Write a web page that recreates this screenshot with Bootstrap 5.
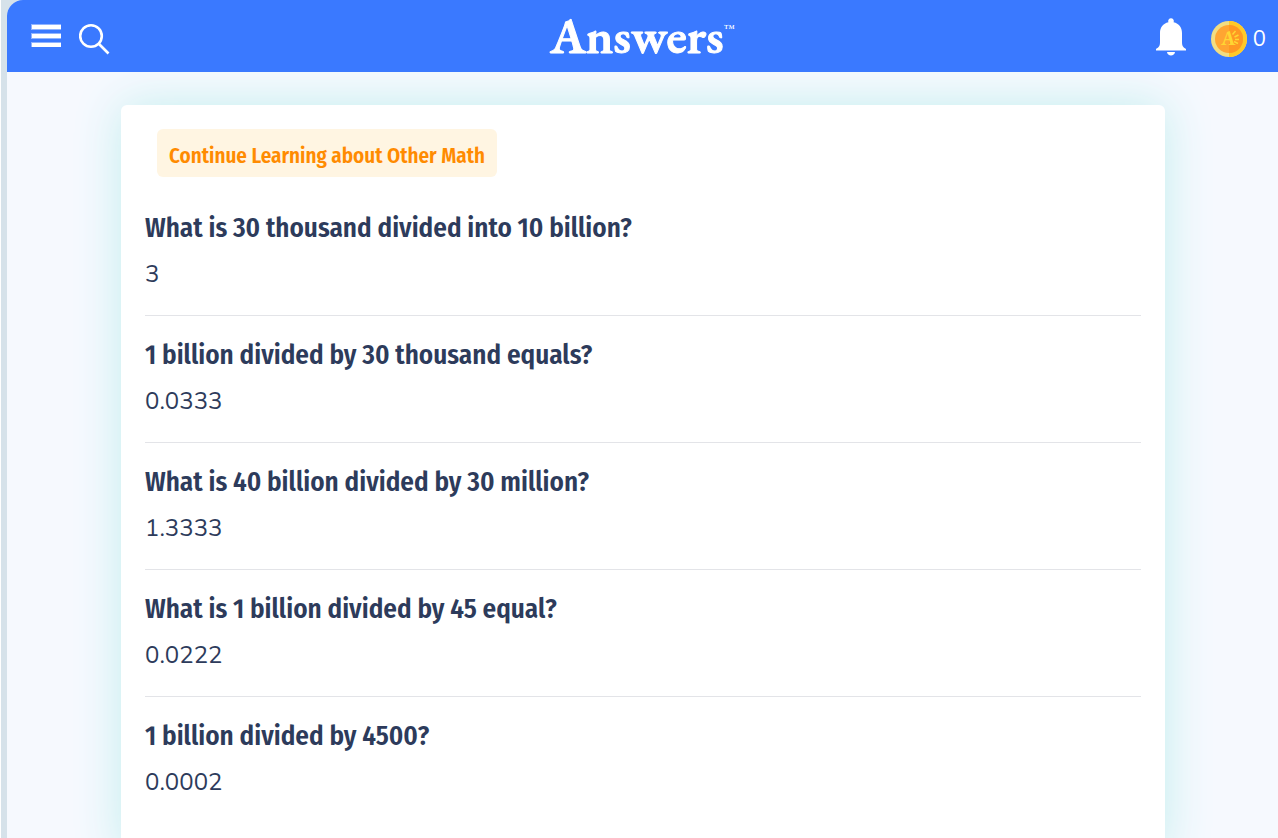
<!DOCTYPE html>
<html lang="en">
<head>
<meta charset="utf-8">
<meta name="viewport" content="width=device-width, initial-scale=1">
<title>Answers</title>
<link href="https://cdn.jsdelivr.net/npm/bootstrap@5.3.0/dist/css/bootstrap.min.css" rel="stylesheet">
<style>
  html { background: #fff; }
  body { margin-left: 1px; border-left: 6px solid #d6e2ea; background: #d6e2ea; color: #2d3b5b; font-family: Nunito, "Open Sans", sans-serif; }
  .page-shell { background: #f6f9fe; border-top-left-radius: 16px; overflow: hidden; min-height: 100vh; }
  .site-header { background: #3a79ff; height: 72px; padding: 2px 12px 0 24px; }
  .icon-button { border: 0; background: none; padding: 0; display: block; line-height: 0; color: #fff; }
  .brand { color: #fff; font: 600 50px/56px "EB Garamond", "Liberation Serif", serif; -webkit-text-stroke: 1px #fff; text-decoration: none; white-space: nowrap; }
  .brand sup { font-size: 10px; font-weight: 500; -webkit-text-stroke: 0; top: -21px; line-height: 0; }
  .coins { font-size: 22px; line-height: 30px; gap: 6px; color: #fff; text-decoration: none; }
  .question-card { margin: 33px 113px 0 114px; padding: 24px 24px 32px; background: #fff; border-radius: 6px; box-shadow: 0 0 48px #c3eeef; }
  .topic { display: inline-block; margin: 0 12px 11px; padding: 0 12px; border-radius: 6px; background: #fff5e2; color: #ff8b00; font: 600 21px/54px "Fira Sans Condensed", "Liberation Sans", sans-serif; height: 48px; }
  .qa { padding: 22px 0 23px; border-top: 1px solid #e3e4e8; }
  .qa:first-of-type { border-color: transparent; }
  .qa h2 { margin: 0 0 11px; font: 600 27px/34px "Fira Sans Condensed", "Liberation Sans", sans-serif; }
  .qa h2 a { color: inherit; text-decoration: none; }
  .qa p { margin: 0; font-size: 24px; line-height: 36px; }
</style>
</head>
<body>
<div class="page-shell">
  <header class="site-header d-flex align-items-center justify-content-between position-relative">
    <div class="d-flex align-items-center gap-3">
      <button class="icon-button pb-1" type="button" aria-label="Menu">
        <svg width="32" height="24" viewBox="0 0 32 24"><path d="M0 1h30v6H0zM0 10h30v6H0zM0 19h30v5H0z" fill="#8fb3ff"/><path d="M1 2h29v4H1zM1 11h29v4H1zM1 20h29v4H1z" fill="#fff"/></svg>
      </button>
      <button class="icon-button pt-1" type="button" aria-label="Search">
        <svg width="32" height="32" viewBox="0 0 32 32" fill="none" stroke="#fff" stroke-width="2.6"><circle cx="12" cy="13" r="10.8"/><path d="M19.500 20.500l10 10"/></svg>
      </button>
    </div>
    <a class="brand position-absolute top-50 start-50 translate-middle" href="#">Answers<sup>™</sup></a>
    <div class="d-flex align-items-center">
      <button class="icon-button me-4" type="button" aria-label="Notifications">
        <svg width="32" height="38" viewBox="0 0 32 38" fill="#fff"><path d="M13.400 4.200a2.800 2.800 0 1 1 5.200 0C24 5.500 27 9.500 27 15v9c0 4 1 5 4 7v1.500H1V31c3-2 4-3 4-7v-9C5 9.500 8 5.500 13.400 4.200zM12 34h8c-.3 4.500-7.700 4.500-8 0z"/></svg>
      </button>
      <a class="coins d-flex align-items-center pt-1" href="#">
        <svg width="36" height="36" viewBox="0 0 36 36" aria-hidden="true"><circle cx="18" cy="18" r="18" fill="#f1dd83"/><path d="M18 0a18 18 0 0 1 0 36z" fill="#ffc928"/><circle cx="18" cy="18" r="14" fill="#ffa532"/><path d="M18 4a14 14 0 0 1 0 28z" fill="#ff9823"/><text x="10" y="24" font-family="EB Garamond, Liberation Serif, serif" font-weight="700" font-size="20" fill="#ffd633">A</text><path d="M21.500 13.500l3-3.500M23.500 16l4-2M24 18.500h4M23 20.500l4 2" stroke="#ffd633" stroke-width="1.500"/></svg>
        <span>0</span>
      </a>
    </div>
  </header>
  <main class="d-flow-root">
    <div class="question-card">
      <div class="topic">Continue Learning about Other Math</div>
      <section class="qa"><h2><a href="#">What is 30 thousand divided into 10 billion?</a></h2><p>3</p></section>
      <section class="qa"><h2><a href="#">1 billion divided by 30 thousand equals?</a></h2><p>0.0333</p></section>
      <section class="qa"><h2><a href="#">What is 40 billion divided by 30 million?</a></h2><p>1.3333</p></section>
      <section class="qa"><h2><a href="#">What is 1 billion divided by 45 equal?</a></h2><p>0.0222</p></section>
      <section class="qa"><h2><a href="#">1 billion divided by 4500?</a></h2><p>0.0002</p></section>
    </div>
  </main>
</div>
<script src="https://cdn.jsdelivr.net/npm/bootstrap@5.3.0/dist/js/bootstrap.bundle.min.js"></script>
</body>
</html>
